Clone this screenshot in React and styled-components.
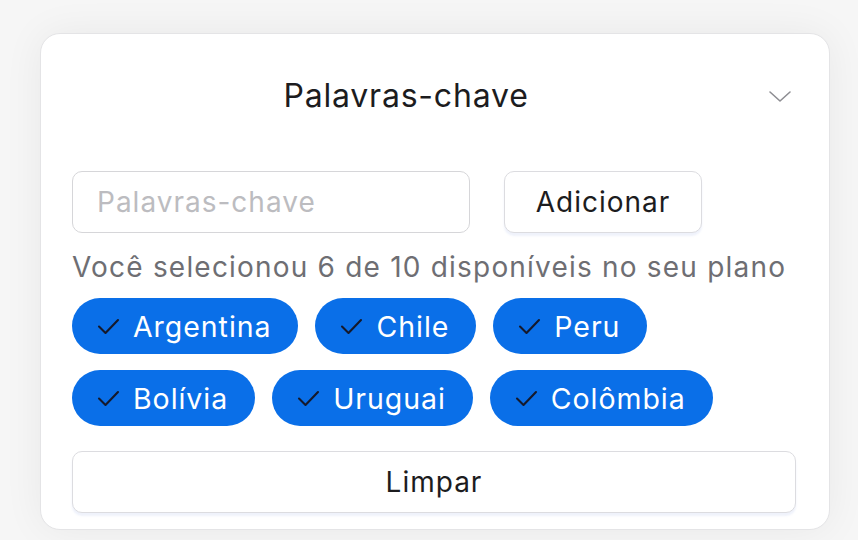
import styled, { createGlobalStyle } from "styled-components";

const GlobalStyle = createGlobalStyle`
  html, body {
    margin: 0;
    padding: 0;
    background: #f6f6f6;
    font-family: Inter, "Noto Sans", "Liberation Sans", sans-serif;
  }
`;

const Page = styled.div`
  width: 858px;
  height: 540px;
  padding: 33px 0 0 40px;
  box-sizing: border-box;
  overflow: hidden;
`;

const Card = styled.section`
  width: 790px;
  height: 497px;
  box-sizing: border-box;
  background: #ffffff;
  border: 1px solid #e4e4e6;
  border-radius: 20px;
  box-shadow: 0 0 40px rgba(0, 0, 0, 0.06);
  padding: 0 33px 0 31px;
  display: flex;
  flex-direction: column;
`;

const Header = styled.div`
  display: flex;
  align-items: center;
  height: 123px;
`;

const Title = styled.h2`
  flex: 1;
  margin: 0;
  text-align: center;
  font-size: 32px;
  font-weight: 400;
  letter-spacing: 0.8px;
  color: #1c1c1e;
`;

const Toggle = styled.div`
  width: 56px;
  display: flex;
  justify-content: flex-end;
  padding-right: 4px;
  box-sizing: border-box;
`;

const FormRow = styled.div`
  display: flex;
  gap: 34px;
  margin-top: 14px;
`;

const Input = styled.input`
  width: 398px;
  height: 62px;
  box-sizing: border-box;
  border: 1.5px solid #d6d6d9;
  border-radius: 10px;
  padding: 0 24px;
  font-family: inherit;
  font-size: 28px;
  letter-spacing: 1px;
  color: #1c1c1e;
  outline: none;

  &::placeholder {
    color: #bcbcc0;
  }
`;

const Button = styled.button`
  height: 62px;
  width: ${p => p.$full ? "100%" : "198px"};
  box-sizing: border-box;
  background: #ffffff;
  border: 1.5px solid #dcdce0;
  border-radius: 10px;
  box-shadow: 0 3px 2px rgba(120, 150, 220, 0.12);
  font-family: inherit;
  font-size: 28px;
  letter-spacing: 1px;
  color: #1c1c1e;
  cursor: pointer;
`;

const Hint = styled.p`
  margin: 15px 0 12px;
  font-size: 28px;
  letter-spacing: 1.2px;
  line-height: 38px;
  color: #6e6e73;
`;

const Chips = styled.div`
  display: flex;
  flex-wrap: wrap;
  gap: 16px 17px;
  margin-bottom: 25px;
`;

const Chip = styled.span`
  display: inline-flex;
  align-items: center;
  gap: 12px;
  height: 56px;
  padding: 0 27px 0 24px;
  box-sizing: border-box;
  border-radius: 28px;
  background: #0a6fe8;
  color: #ffffff;
  font-size: 28.5px;
  letter-spacing: 0.95px;
`;

const Check = () => (
  <svg width="25" height="24" viewBox="0 0 25 24" fill="none" stroke="#15192b" strokeWidth="2.1" strokeLinecap="round" strokeLinejoin="round">
    <path d="M3 12.5l6.5 6.5L22 6" />
  </svg>
);

const Chevron = () => (
  <svg width="24" height="24" viewBox="0 0 24 24" fill="none" stroke="#8e8e93" strokeWidth="1.6" strokeLinecap="round" strokeLinejoin="round">
    <path d="M2 8l10 9 10-9" />
  </svg>
);

const paises = ["Argentina", "Chile", "Peru", "Bolívia", "Uruguai", "Colômbia"];

export default function App() {
  return (
    <>
      <GlobalStyle />
      <Page>
        <Card>
          <Header>
            <Title>Palavras-chave</Title>
            <Toggle><Chevron /></Toggle>
          </Header>
          <FormRow>
            <Input placeholder="Palavras-chave" />
            <Button>Adicionar</Button>
          </FormRow>
          <Hint>Você selecionou 6 de 10 disponíveis no seu plano</Hint>
          <Chips>
            {paises.map(p => (
              <Chip key={p}><Check />{p}</Chip>
            ))}
          </Chips>
          <Button $full>Limpar</Button>
        </Card>
      </Page>
    </>
  );
}
